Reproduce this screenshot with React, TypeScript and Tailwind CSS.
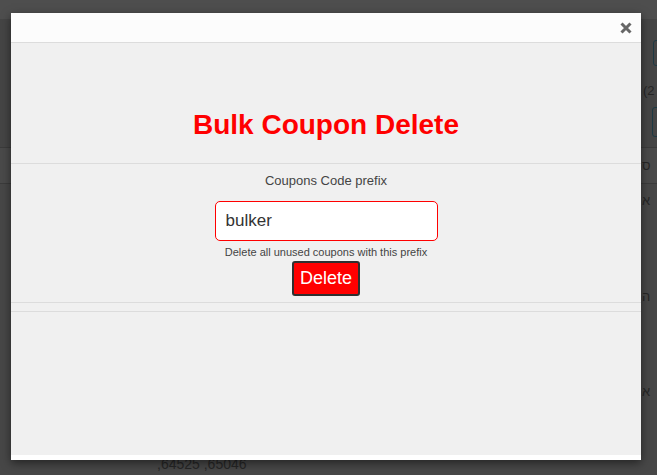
import React from 'react';

const CloseIcon: React.FC = () => (
  <svg width="12" height="12" viewBox="0 0 12 12" className="block">
    <path d="M1.5 1.5 L10.5 10.5 M10.5 1.5 L1.5 10.5" stroke="#666666" strokeWidth="3" strokeLinecap="butt" />
  </svg>
);

const BackgroundPage: React.FC = () => (
  <div className="flex flex-col text-[13px] text-[#262626]">
    <div className="h-[19px] bg-[#4e4e4e]" />
    <div className="h-[128px] bg-[#454545] flex flex-col">
      <div className="ml-[653px] mt-[21px] w-[20px] h-[26px] border border-[#1e3a44] rounded-[3px]" />
      <div className="ml-[643px] mt-[17px] leading-[15px]">(2</div>
      <div className="ml-[652px] mt-[9px] w-[20px] h-[30px] border border-[#1e3a44] rounded-[3px]" />
    </div>
    <div className="h-[37px] bg-[#4a4a4a] border-y border-[#3b3b3b] flex items-center">
      <span className="ml-[642px]">ס</span>
    </div>
    <div className="h-[274px] bg-[#474747] flex flex-col">
      <div className="ml-[642px] mt-[9px] leading-[15px]">א</div>
      <div className="ml-[642px] mt-[81px] leading-[15px]">ה</div>
      <div className="ml-[642px] mt-[80px] leading-[15px]">א</div>
      <div className="ml-[157px] mt-[57px] text-[14px] leading-[16px]">,64525 ,65046</div>
    </div>
  </div>
);

const BulkDeleteModal: React.FC = () => (
  <div className="absolute left-[11px] top-[13px] w-[630px] h-[447px] bg-white shadow-[0_3px_9px_rgba(0,0,0,0.5)] flex flex-col">
    <div className="h-[30px] shrink-0 bg-[#fcfcfc] border-b border-[#dcdcdc] flex items-center justify-end pr-[9px]">
      <CloseIcon />
    </div>

    <div className="flex-1 bg-[#f0f0f0] flex flex-col">
      <h2 className="pt-[66px] pb-[22px] text-center text-[28px] leading-[32px] font-bold text-[#ff0000]">
        Bulk Coupon Delete
      </h2>

      <div className="border-t border-[#dcdcdc] flex flex-col items-center pt-[8px]">
        <label className="text-[13px] leading-[18px] text-[#444444]">Coupons Code prefix</label>
        <input
          readOnly
          value="bulker"
          className="mt-[11px] w-[223px] h-[40px] bg-white border border-[#ff0000] rounded-[5px] px-[10px] text-[17px] text-[#333333] outline-none"
        />
        <div className="mt-[4px] text-[11px] leading-[15px] text-[#444444]">
          Delete all unused coupons with this prefix
        </div>
        <button className="mt-[1px] h-[35px] px-[6px] bg-[#ff0000] border-2 border-[#2f2f2f] rounded-[3px] text-[18px] text-white">
          Delete
        </button>
      </div>

      <div className="mt-[6px] h-[10px] border-y border-[#dcdcdc]" />
    </div>

    <div className="h-[5px] shrink-0 bg-white" />
  </div>
);

const App: React.FC = () => {
  return (
    <div className="relative w-[657px] h-[475px] overflow-hidden bg-[#474747] font-['Liberation_Sans',Arial,sans-serif]">
      <BackgroundPage />
      <BulkDeleteModal />
    </div>
  );
};

export default App;
